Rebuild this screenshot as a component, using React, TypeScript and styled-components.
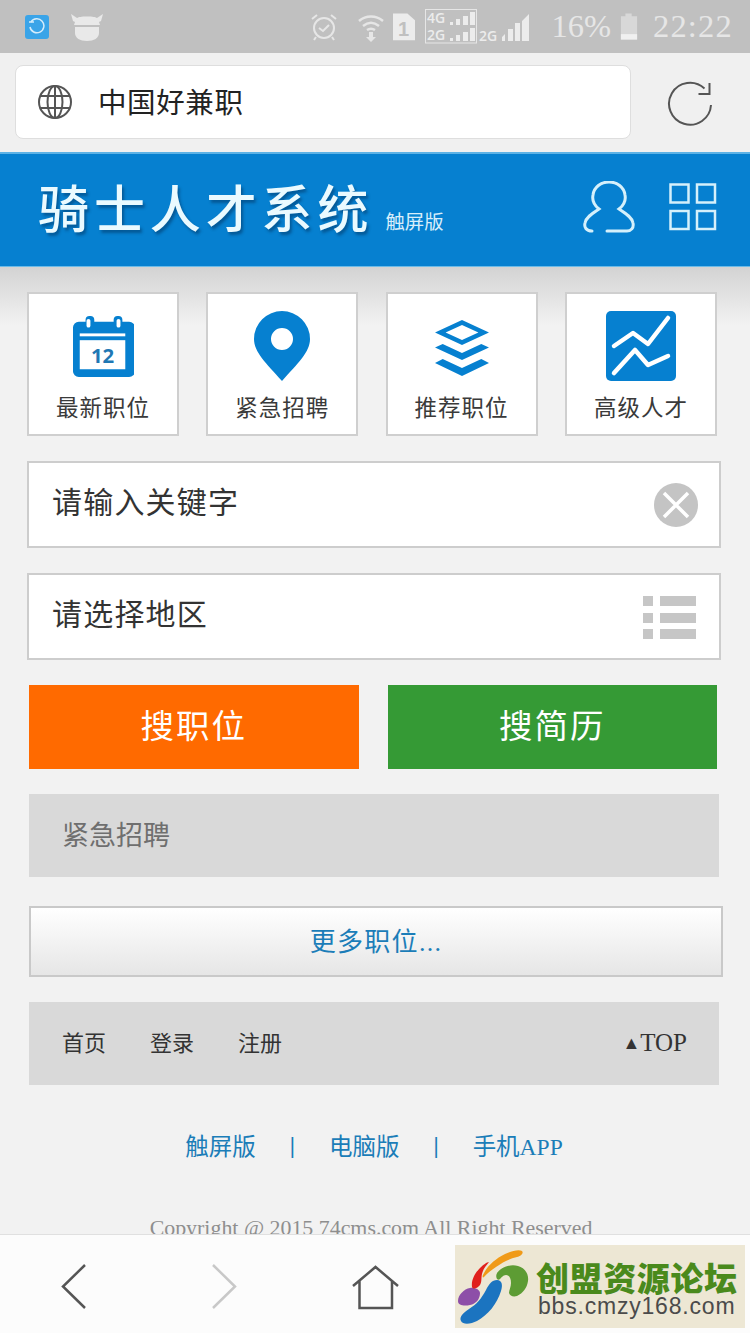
import React, { FunctionComponent } from "react";
import styled, { createGlobalStyle } from "styled-components";

const SERIF = `"Liberation Serif", "Noto Sans CJK SC", serif`;
const SANS = `"Liberation Sans", "Noto Sans CJK SC", sans-serif`;
const BLUE = "#0680d0";
const LINK = "#1b7db8";

const Global = createGlobalStyle`
	html, body {
		margin: 0;
		padding: 0;
		background: #f1f1f1;
	}
	* {
		box-sizing: border-box;
	}
`;

const Page = styled.div`
	position: relative;
	width: 750px;
	height: 1333px;
	overflow: hidden;
	background: #f2f2f2;
	font-family: ${SERIF};
	color: #333;
`;

/* status bar */
const StatusBar = styled.div`
	display: flex;
	align-items: center;
	height: 53px;
	padding: 0 17px 0 25px;
	background: #c0c0c0;
	color: #ececec;
`;
const AppBadge = styled.div`
	display: flex;
	align-items: center;
	justify-content: center;
	width: 24px;
	height: 24px;
	margin-right: 22px;
	background: #3aa4e8;
	border-radius: 3px;
`;
const StatusSpacer = styled.div`
	flex: 1;
`;
const StatusIcon = styled.svg<{ $left?: number }>`
	display: block;
	margin-left: ${(p) => p.$left || 0}px;
`;
const StatusText = styled.span<{ $left: number; $spacing?: number }>`
	margin-left: ${(p) => p.$left}px;
	font-size: 32.5px;
	letter-spacing: ${(p) => p.$spacing || 0}px;
	line-height: 53px;
	color: #e6e6e6;
`;

/* address bar */
const AddressRow = styled.div`
	display: flex;
	align-items: center;
	height: 99px;
	padding: 0 37px 0 15px;
	background: #f0f0f0;
`;
const AddressBox = styled.div`
	display: flex;
	align-items: center;
	width: 616px;
	height: 74px;
	padding-left: 22px;
	margin-top: -1px;
	background: #fff;
	border: 1px solid #dedede;
	border-radius: 8px;
`;
const AddressText = styled.span`
	margin: -3px 0 0 26px;
	font-size: 28.5px;
	letter-spacing: 0.6px;
	color: #222;
`;
const ReloadSlot = styled.div`
	display: flex;
	margin-left: auto;
`;

/* blue header */
const Header = styled.header`
	display: flex;
	align-items: center;
	height: 115px;
	padding: 0 33px 0 38px;
	background: ${BLUE};
	border-top: 2px solid #5cb2e6;
	border-bottom: 1px solid #6bbbe8;
`;
const Brand = styled.div`
	margin-bottom: 8px;
	font-family: "Noto Sans CJK SC", sans-serif;
	font-size: 51px;
	font-weight: 500;
	letter-spacing: 4.9px;
	line-height: 60px;
	color: #eafaff;
	text-shadow: 2px 3px 3px rgba(0, 40, 80, 0.45);
`;
const BrandTag = styled.div`
	margin: 20px 0 0 12px;
	font-family: "Noto Sans CJK SC", sans-serif;
	font-size: 19.4px;
	color: #d8eefb;
`;
const HeaderIcons = styled.div`
	display: flex;
	align-items: center;
	gap: 34px;
	margin: -7px 0 0 auto;
`;

/* body */
const Main = styled.main`
	padding: 25px 0 0 27px;
	background: linear-gradient(#d3d3d3, #f2f2f2 58px);
`;
const CardGrid = styled.div`
	display: grid;
	grid-template-columns: repeat(4, 152px);
	column-gap: 27.3px;
`;
const Card = styled.div`
	display: flex;
	flex-direction: column;
	align-items: center;
	height: 144px;
	background: #fff;
	border: 2px solid #cfcfcf;
`;
const CardIcon = styled.div`
	display: flex;
	align-items: center;
	justify-content: center;
	height: 88px;
	margin-top: 8px;
`;
const CardLabel = styled.div`
	font-size: 22.5px;
	letter-spacing: 1px;
	line-height: 34px;
	margin-top: 2px;
	color: #3a3a3a;
`;
const Field = styled.div`
	display: flex;
	align-items: center;
	justify-content: space-between;
	width: 694px;
	height: 87px;
	margin-top: 25px;
	padding: 0 21px 0 23px;
	background: #fff;
	border: 2px solid #cdcdcd;
`;
const FieldText = styled.span`
	margin-top: -10px;
	font-size: 30px;
	letter-spacing: 1.2px;
	color: #333;
`;
const ButtonRow = styled.div`
	display: flex;
	gap: 29px;
	margin: 25px 0 0 2px;
`;
const SearchButton = styled.button<{ $bg: string }>`
	width: 329.5px;
	height: 84px;
	padding: 0 0 8px;
	border: none;
	background: ${(p) => p.$bg};
	color: #fff;
	font-family: ${SERIF};
	font-size: 33.500px;
	letter-spacing: 2px;
`;
const GrayBar = styled.div`
	display: flex;
	align-items: center;
	width: 690px;
	height: 83px;
	margin: 25px 0 0 2px;
	padding: 0 32px 4px 33px;
	background: #d9d9d9;
`;
const SectionTitle = styled.span`
	font-size: 27px;
	color: #6f6f6f;
`;
const MoreButton = styled.div`
	display: flex;
	align-items: center;
	justify-content: center;
	width: 694px;
	height: 71px;
	margin: 29px 0 0 2px;
	padding-bottom: 4px;
	background: linear-gradient(#fff, #e6e6e6);
	border: 2px solid #c9c9c9;
	font-size: 26px;
	letter-spacing: 1.3px;
	color: ${LINK};
`;
const FooterNav = styled.div`
	display: flex;
	gap: 44px;
	margin-top: -2px;
	font-size: 22px;
	color: #333;
`;
const TopLink = styled.span`
	margin: 2px 0 0 auto;
	font-size: 25px;
	color: #333;
`;
const TopArrow = styled.span`
	font-size: 18px;
	vertical-align: 2px;
`;
const Versions = styled.div`
	display: flex;
	justify-content: center;
	align-items: center;
	gap: 34px;
	width: 694px;
	margin: 44px 0 0 0;
	height: 32px;
	font-size: 23.500px;
	color: ${LINK};
`;
const Divider = styled.span`
	font-weight: 700;
`;
const Copyright = styled.div`
	width: 684px;
	margin: 54px 0 0 2px;
	text-align: center;
	font-size: 21.9px;
	color: #8e8e8e;
`;

/* browser toolbar sits over the page */
const BrowserBar = styled.nav`
	position: absolute;
	left: 0;
	right: 0;
	top: 1234px;
	height: 99px;
	display: flex;
	align-items: flex-start;
	padding: 29px 0 0 60px;
	background: #fcfcfc;
	border-top: 1px solid #e0e0e0;
`;
const BarIcon = styled.svg<{ $left: number }>`
	display: block;
	margin-left: ${(p) => p.$left}px;
`;
const Watermark = styled.div`
	position: absolute;
	left: 455px;
	top: 1245px;
	width: 290px;
	height: 83px;
	display: flex;
	background: #ede7d4;
`;
const WatermarkText = styled.div`
	display: flex;
	flex-direction: column;
	margin-left: 2px;
`;
const WatermarkTitle = styled.div`
	margin-top: 16px;
	font-family: "Noto Sans CJK SC", sans-serif;
	font-size: 33px;
	font-weight: 900;
	line-height: 33px;
	letter-spacing: 0.6px;
	color: #4a8a1c;
`;
const WatermarkUrl = styled.div`
	margin: 1px 0 0 2px;
	font-family: ${SANS};
	font-size: 23px;
	line-height: 23px;
	letter-spacing: 0.8px;
	color: #4b4b4b;
`;

const CalendarIcon: FunctionComponent = () => (
	<svg width="62" height="62" viewBox="0 0 64 64">
		<path d="M6 7h7V5a4 4 0 0 1 4-4h1a4 4 0 0 1 4 4v2h20V5a4 4 0 0 1 4-4h1a4 4 0 0 1 4 4v2h7a6 6 0 0 1 6 6v45a6 6 0 0 1-6 6H6a6 6 0 0 1-6-6V13a6 6 0 0 1 6-6z" fill={BLUE} transform="translate(1 0)" />
		<rect x="15" y="4" width="4" height="9" rx="2" fill="#fff" />
		<rect x="46" y="4" width="4" height="9" rx="2" fill="#fff" />
		<rect x="8" y="19" width="47" height="3" fill="#fff" />
		<rect x="8" y="26" width="47" height="30" fill="#fff" />
		<text x="31.5" y="50" textAnchor="middle" fontFamily="Open Sans, sans-serif" fontWeight="700" fontSize="21" fill="#1f78b4">12</text>
	</svg>
);
const PinIcon: FunctionComponent = () => (
	<svg width="56" height="70" viewBox="0 0 56 70">
		<path fillRule="evenodd" d="M28 0a28 28 0 0 1 28 28c0 13-12 24-28 42C12 52 0 41 0 28A28 28 0 0 1 28 0zm0 17a11 11 0 1 0 0 22 11 11 0 0 0 0-22z" fill={BLUE} />
	</svg>
);
const LayersIcon: FunctionComponent = () => (
	<svg width="54" height="56" viewBox="0 0 56 56" preserveAspectRatio="none" style={{ marginTop: 3 }}>
		<path fillRule="evenodd" d="M28 0l28 12.500-28 12.500L0 12.500zM28 5L11 12.500 28 20l17-7.500z" fill={BLUE} />
		<path d="M8 24l20 9 20-9 8 3.500-28 12.500L0 27.500z" fill={BLUE} />
		<path d="M8 39l20 9 20-9 8 4-28 13L0 43z" fill={BLUE} />
	</svg>
);
const ChartIcon: FunctionComponent = () => (
	<svg width="70" height="70" viewBox="0 0 70 70">
		<rect width="70" height="70" rx="5" fill={BLUE} />
		<path d="M8 35l19-13 15 11L62 7M8 62l21-23 13 15 20-9" fill="none" stroke="#fff" strokeWidth="4.500" strokeLinecap="round" strokeLinejoin="round" />
	</svg>
);
const ClearIcon: FunctionComponent = () => (
	<svg width="44" height="44" viewBox="0 0 44 44">
		<circle cx="22" cy="22" r="22" fill="#c4c4c4" />
		<path d="M10 10l24 24M34 10L10 34" stroke="#fff" strokeWidth="3.500" />
	</svg>
);
const ListIcon: FunctionComponent = () => (
	<svg width="55" height="44" viewBox="0 0 55 44">
		<g fill="#c6c6c6">
			<rect x="0" y="1" width="10" height="10" />
			<rect x="17" y="1" width="36" height="10" />
			<rect x="0" y="18" width="10" height="10" />
			<rect x="17" y="18" width="36" height="10" />
			<rect x="0" y="34" width="10" height="10" />
			<rect x="17" y="34" width="36" height="10" />
		</g>
	</svg>
);

const cards = [
	{ label: "最新职位", icon: <CalendarIcon /> },
	{ label: "紧急招聘", icon: <PinIcon /> },
	{ label: "推荐职位", icon: <LayersIcon /> },
	{ label: "高级人才", icon: <ChartIcon /> },
];

const App: FunctionComponent = (): JSX.Element => {
	return (
		<Page>
			<Global />
			<StatusBar>
				<AppBadge>
					<svg width="18" height="18" viewBox="0 0 18 18">
						<path d="M3 4a7 7 0 1 1-1 5" fill="none" stroke="#d5ecfb" strokeWidth="1.500" />
						<path d="M1 4h5" stroke="#d5ecfb" strokeWidth="1.500" />
					</svg>
				</AppBadge>
				<svg width="32" height="28" viewBox="0 0 32 28">
					<path d="M0 1l6 4c2-1 4-1.500 10-1.500s8 .5 10 1.500l6-4-2 7-2 1 1 3H3l1-3-2-1zM4 14h24v6c0 5-5 8-12 8S4 25 4 20z" fill="#e9e9e9" />
				</svg>
				<StatusSpacer />
				<StatusIcon width="28" height="28" viewBox="0 0 28 28">
					<g fill="none" stroke="#e6e6e6" strokeWidth="2">
						<circle cx="14" cy="15" r="10" />
						<path d="M9 15l4 3 6-6M2 6l5-4M26 6l-5-4M6 24l-2 3M22 24l2 3" />
					</g>
				</StatusIcon>
				<StatusIcon $left={20} width="26" height="30" viewBox="0 0 26 30">
					<g fill="none" stroke="#e6e6e6" strokeWidth="2.500">
						<path d="M1 9c7-6 17-6 24 0M5 14c5-4 11-4 16 0M9 18c3-2 5-2 8 0" />
					</g>
					<path d="M11 20h4v5h3l-5 5-5-5h3z" fill="#e6e6e6" />
				</StatusIcon>
				<StatusIcon $left={9} width="22" height="29" viewBox="0 0 23 29">
					<path d="M0 1h15l8 7v21H0z" fill="#ececec" />
					<text x="11" y="24" textAnchor="middle" fontFamily="Liberation Sans, sans-serif" fontWeight="700" fontSize="21" fill="#c0c0c0">1</text>
				</StatusIcon>
				<StatusIcon $left={10} width="104" height="35" viewBox="0 0 104 35">
					<rect x="0.500" y="0.500" width="51" height="33.500" fill="none" stroke="#e6e6e6" />
					<g fontFamily="Open Sans, sans-serif" fontWeight="600" fontSize="14" fill="#ececec">
						<text x="2" y="14">4G</text>
						<text x="2" y="31">2G</text>
						<text x="54" y="32">2G</text>
					</g>
					<g fill="#ececec">
						<path d="M25 13h3v3h-3zM31 10h4v6h-4zM38 7h5v9h-5zM45 3h5v13h-5z" />
						<path d="M25 29h3v3h-3zM31 26h4v6h-4zM38 23h5v9h-5zM45 19h5v13h-5z" />
						<path d="M77 28l3-3v7h-3zM83 20h5v12h-5zM90 14h5v18h-5zM97 12l7-7v27h-7z" />
					</g>
				</StatusIcon>
				<StatusText $left={22}>16%</StatusText>
				<StatusIcon $left={9} width="18" height="29" viewBox="0 0 20 29">
					<path d="M6 0h7v3h6v26H1V3h5z" fill="#d8d8d8" />
					<rect x="1" y="23" width="18" height="6" fill="#f0f0f0" />
				</StatusIcon>
				<StatusText $left={15} $spacing={1.2}>22:22</StatusText>
			</StatusBar>

			<AddressRow>
				<AddressBox>
					<svg width="34" height="34" viewBox="0 0 34 34">
						<g fill="none" stroke="#555" strokeWidth="2">
							<circle cx="17" cy="17" r="16" />
							<ellipse cx="17" cy="17" rx="7.500" ry="16" />
							<path d="M3 11h28M3 23h28M17 1v32" />
						</g>
					</svg>
					<AddressText>中国好兼职</AddressText>
				</AddressBox>
				<ReloadSlot>
					<svg width="46" height="46" viewBox="0 0 46 46">
						<path d="M37.500 8.500A21 21 0 1 0 44 25" fill="none" stroke="#555" strokeWidth="2" />
						<path d="M42.500 3v11h-11" fill="none" stroke="#555" strokeWidth="2" />
					</svg>
				</ReloadSlot>
			</AddressRow>

			<Header>
				<Brand>骑士人才系统</Brand>
				<BrandTag>触屏版</BrandTag>
				<HeaderIcons>
					<svg width="52" height="52" viewBox="0 0 52 52">
						<path d="M9 50C3 50 1 46 2 42c1-6 8-10 14-14-5-4-7-9-6-14C11 6 18 1 26 1s15 5 16 13c1 5-1 10-6 14 6 4 13 8 14 14 1 5-2 8-6 8H24" fill="none" stroke="#d5f0fb" strokeWidth="3" strokeLinecap="round" />
					</svg>
					<svg width="48" height="48" viewBox="0 0 48 48">
						<g fill="none" stroke="#d5f0fb" strokeWidth="2.500">
							<rect x="1.500" y="1.500" width="18" height="18" />
							<rect x="28" y="1.500" width="18" height="18" />
							<rect x="1.500" y="28" width="18" height="18" />
							<rect x="28" y="28" width="18" height="18" />
						</g>
					</svg>
				</HeaderIcons>
			</Header>

			<Main>
				<CardGrid>
					{cards.map((card) => (
						<Card key={card.label}>
							<CardIcon>{card.icon}</CardIcon>
							<CardLabel>{card.label}</CardLabel>
						</Card>
					))}
				</CardGrid>
				<Field>
					<FieldText>请输入关键字</FieldText>
					<ClearIcon />
				</Field>
				<Field>
					<FieldText>请选择地区</FieldText>
					<ListIcon />
				</Field>
				<ButtonRow>
					<SearchButton $bg="#ff6a00">搜职位</SearchButton>
					<SearchButton $bg="#359a35">搜简历</SearchButton>
				</ButtonRow>
				<GrayBar>
					<SectionTitle>紧急招聘</SectionTitle>
				</GrayBar>
				<MoreButton>更多职位...</MoreButton>
				<GrayBar>
					<FooterNav>
						<span>首页</span>
						<span>登录</span>
						<span>注册</span>
					</FooterNav>
					<TopLink>
						<TopArrow>▲</TopArrow>TOP
					</TopLink>
				</GrayBar>
				<Versions>
					<span>触屏版</span>
					<Divider>|</Divider>
					<span>电脑版</span>
					<Divider>|</Divider>
					<span>手机APP</span>
				</Versions>
				<Copyright>Copyright @ 2015 74cms.com All Right Reserved</Copyright>
			</Main>

			<BrowserBar>
				<BarIcon $left={0} width="28" height="46" viewBox="0 0 28 46">
					<path d="M25 1L3 22.500 25 44" fill="none" stroke="#555" strokeWidth="2.500" />
				</BarIcon>
				<BarIcon $left={122} width="28" height="46" viewBox="0 0 28 46">
					<path d="M3 1l22 21.500L3 44" fill="none" stroke="#c8c8c8" strokeWidth="2.500" />
				</BarIcon>
				<BarIcon $left={113} width="48" height="46" viewBox="0 0 48 46">
					<path d="M2 22L24.500 3 47 22M8.500 17v27H41V17" fill="none" stroke="#555" strokeWidth="2.500" />
				</BarIcon>
			</BrowserBar>
			<Watermark>
				<svg width="79" height="83" viewBox="0 0 79 83">
					<path d="M6 76c-2-4 2-8 8-12 8-5 12-10 17-19 3-6 6-10 11-10 5 0 6 5 4 11-4 13-13 24-24 30-6 3-14 4-16 0z" fill="#1b74c0" />
					<path d="M3 56c0-6 6-12 12-13 5-1 10 2 10 5 0 6-4 11-10 12-5 1-12 1-12-4z" fill="#8d4fa8" />
					<path d="M17 42c-1-7 3-14 8-19 3-3 7-6 9-6-3 4-6 7-7 12-1 4 0 8-2 11-2 3-7 5-8 2z" fill="#e0201c" />
					<path d="M28 30c4-9 12-16 22-21 6-3 14-5 17-3 2 2-1 5-5 6-8 2-14 5-21 10-5 3-9 7-12 10-1 1-2 0-1-2z" fill="#f09a18" />
					<path d="M42 34c-2-4 0-7 4-10 5-3 11-5 17-3 7 2 11 8 10 15-1 7-5 12-11 15-4 1-7 0-8-3 0-3 2-6 2-10 0-5-2-8-5-8-3 0-5 3-6 4-1 1-2 1-3 0z" fill="#5d9c34" />
				</svg>
				<WatermarkText>
					<WatermarkTitle>创盟资源论坛</WatermarkTitle>
					<WatermarkUrl>bbs.cmzy168.com</WatermarkUrl>
				</WatermarkText>
			</Watermark>
		</Page>
	);
};

export default App;
